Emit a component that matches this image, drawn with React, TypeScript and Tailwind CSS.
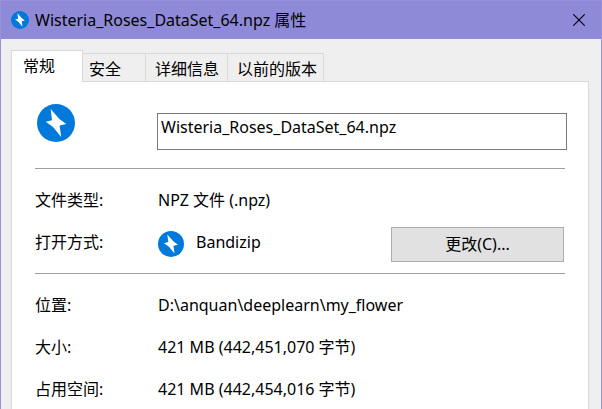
import type { ReactNode } from "react";

const FILE_NAME = "Wisteria_Roses_DataSet_64.npz";

function BoltIcon({ className }: { className: string }) {
  return (
    <svg viewBox="0 0 38 38" className={className} aria-hidden="true">
      <circle cx="19" cy="19" r="19" fill="#0179da" />
      <path d="M13.6 5 L22.4 15 L29.2 20 L22.6 21.4 L24.2 33 L16 23 L8.8 17.8 L15 16.2 Z" fill="#fff" />
    </svg>
  );
}

function Row({ label, children }: { label: string; children: ReactNode }) {
  return (
    <div className="flex h-7 items-start">
      <dt className="w-[123px] shrink-0">{label}</dt>
      <dd className="min-w-0 flex-1">{children}</dd>
    </div>
  );
}

export default function App() {
  return (
    <div className="flex min-h-screen flex-col border-x border-t border-[#9792da] bg-[#efefef] font-['Noto_Sans','Noto_Sans_CJK_SC',sans-serif] text-base leading-6 text-black">
      <header className="flex h-[38px] items-center bg-[#8f8ad7] pl-[10px] pr-4">
        <BoltIcon className="size-[18px] shrink-0" />
        <h1 className="ml-[6px] flex-1 whitespace-nowrap">{FILE_NAME} 属性</h1>
        <button type="button" aria-label="关闭" className="shrink-0">
          <svg viewBox="0 0 12 12" className="size-3" fill="none" stroke="#000" strokeWidth="1.1">
            <path d="M0.3 0.3 L11.7 11.7 M11.7 0.3 L0.3 11.7" />
          </svg>
        </button>
      </header>

      <main className="flex flex-1 flex-col pl-[10px] pr-3 pt-[11px]">
        <div role="tablist" className="z-10 -mb-px flex h-8 items-end whitespace-nowrap">
          <button type="button" role="tab" aria-selected="true" className="h-8 w-[72px] border-x border-t border-[#d9d9d9] bg-white pb-[2px] pl-[11px] text-left">
            常规
          </button>
          <button type="button" role="tab" aria-selected="false" className="mb-px h-7 w-[63px] border-r border-t border-[#d9d9d9] pl-[6px] pt-[2px] text-left">
            安全
          </button>
          <button type="button" role="tab" aria-selected="false" className="mb-px h-7 w-[82px] border-r border-t border-[#d9d9d9] pl-[9px] pt-[2px] text-left">
            详细信息
          </button>
          <button type="button" role="tab" aria-selected="false" className="mb-px h-7 w-[96px] border-r border-t border-[#d9d9d9] pl-[9px] pt-[2px] text-left">
            以前的版本
          </button>
        </div>

        <section role="tabpanel" aria-label="常规" className="flex-1 border-x border-t border-[#d9d9d9] bg-white pl-[23px] pr-[21px] pt-[22px]">
          <div className="flex items-start">
            <div className="w-[122px] shrink-0 pl-[2px]">
              <BoltIcon className="size-[38px]" />
            </div>
            <input
              type="text"
              aria-label="文件名"
              defaultValue={FILE_NAME}
              className="mt-[9px] h-[37px] min-w-0 flex-1 border border-[#7a7a7a] bg-white px-[3px] pb-[10px] outline-none"
            />
          </div>
          <hr className="mr-[2px] mt-[18px] border-[#a0a0a0]" />
          <dl className="mt-[19px] flex flex-col gap-[14px]">
            <Row label="文件类型:">NPZ 文件 (.npz)</Row>
            <Row label="打开方式:">
              <div className="flex h-7 items-center">
                <BoltIcon className="size-[26px] shrink-0" />
                <span className="ml-3 flex-1 self-start">Bandizip</span>
                <button type="button" className="mr-[3px] h-[35px] w-[173px] border border-[#adadad] bg-[#e1e1e1]">
                  更改(C)...
                </button>
              </div>
            </Row>
          </dl>
          <hr className="mr-[2px] mt-[15px] border-[#a0a0a0]" />
          <dl className="mt-[19px] flex flex-col gap-[14px]">
            <Row label="位置:">D:\anquan\deeplearn\my_flower</Row>
            <Row label="大小:">421 MB (442,451,070 字节)</Row>
            <Row label="占用空间:">421 MB (442,454,016 字节)</Row>
          </dl>
        </section>
      </main>
    </div>
  );
}
